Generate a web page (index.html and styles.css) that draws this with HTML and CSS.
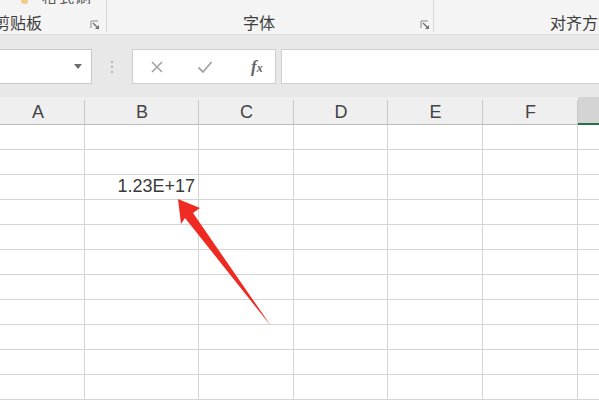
FILE: index.html
```html
<!DOCTYPE html>
<html>
  <head>
    <title>Excel</title>
    <link rel="stylesheet" href="styles.css">
  </head>
  <body>
    <div class="window">
      <div class="ribbon">
        <div class="group group-clip">
          <div class="clip-top">
            <span class="paste-icon"></span>
            <span class="clip-text">格式刷</span>
          </div>
          <div class="group-foot">
            <span class="group-label">剪贴板</span>
            <svg class="launcher" width="10" height="10" viewBox="0 0 10 10">
              <polyline points="1,8 1,1 8,1" fill="none" stroke="#8a8a8a" stroke-width="1"/>
              <line x1="3" y1="3" x2="7" y2="7" stroke="#6a6a6a" stroke-width="1.2"/>
              <polygon points="9,5 9,9 5,9" fill="#6a6a6a"/>
            </svg>
          </div>
        </div>
        <div class="group group-font">
          <div class="group-foot">
            <span class="group-label">字体</span>
            <svg class="launcher" width="10" height="10" viewBox="0 0 10 10">
              <polyline points="1,8 1,1 8,1" fill="none" stroke="#8a8a8a" stroke-width="1"/>
              <line x1="3" y1="3" x2="7" y2="7" stroke="#6a6a6a" stroke-width="1.2"/>
              <polygon points="9,5 9,9 5,9" fill="#6a6a6a"/>
            </svg>
          </div>
        </div>
        <div class="group group-align">
          <div class="group-foot">
            <span class="group-label">对齐方式</span>
          </div>
        </div>
      </div>

      <div class="formula-bar">
        <div class="name-box">
          <span class="caret"></span>
        </div>
        <div class="grip">
          <span></span><span></span><span></span>
        </div>
        <div class="fx-buttons">
          <svg width="14" height="14" viewBox="0 0 14 14">
            <path d="M2 2L12 12M12 2L2 12" stroke="#a3a3a3" stroke-width="1.6" fill="none"/>
          </svg>
          <svg width="16" height="14" viewBox="0 0 16 14">
            <path d="M1.5 7.5L6 12L14.5 2" stroke="#a3a3a3" stroke-width="1.8" fill="none"/>
          </svg>
          <span class="fx">f<sub>x</sub></span>
        </div>
        <div class="formula-input"></div>
      </div>

      <div class="sheet">
        <div class="col-head">A</div>
        <div class="col-head">B</div>
        <div class="col-head">C</div>
        <div class="col-head">D</div>
        <div class="col-head">E</div>
        <div class="col-head">F</div>
        <div class="col-head selected"></div>
      </div>

      <svg class="arrow" width="599" height="402" viewBox="0 0 599 402">
        <polygon points="178,199 200,208 193,213 271,326 185,218 181,224" fill="#ee2a22"/>
      </svg>
    </div>

    <script>
      // fill the body rows of the sheet
      const sheet = document.querySelector(".sheet");
      for (let r = 0; r < 11; r++) {
        for (let c = 0; c < 7; c++) {
          const cell = document.createElement("div");
          cell.className = "cell";
          if (r === 2 && c === 1) {
            cell.textContent = "1.23E+17";
          }
          sheet.appendChild(cell);
        }
      }
    </script>
  </body>
</html>
```

FILE: styles.css
```css
/* page */
body {
  margin: 0;
  font-family: "Liberation Sans", "Noto Sans CJK SC", sans-serif;
  color: #444;
}

.window {
  position: relative;
  width: 599px;
  height: 402px;
  overflow: hidden;
  background: #fff;
}

/* ribbon */
.ribbon {
  display: flex;
  height: 35px;
  background: #f4f4f4;
  border-bottom: 1px solid #dcdcdc;
  box-sizing: border-box;
}

.group {
  display: flex;
  flex-direction: column;
  justify-content: flex-end;
  flex-shrink: 0;
  padding-bottom: 2px;
  box-sizing: border-box;
}

.group-clip {
  width: 107px;
  border-right: 1px solid #d6d6d6;
  margin-bottom: 2px;
  padding-bottom: 0;
}

.group-font {
  width: 327px;
  border-right: 1px solid #d6d6d6;
  margin-bottom: 2px;
  padding-bottom: 0;
}

.group-align {
  flex: 1;
  min-width: 0;
  overflow: hidden;
}

.clip-top {
  display: flex;
  align-items: flex-end;
  height: 4px;
  overflow: hidden;
  margin-bottom: auto;
}

.paste-icon {
  width: 7px;
  height: 12px;
  margin-left: 21px;
  border-radius: 0 0 4px 4px;
  background: #f2c98a;
}

.clip-text {
  margin-left: 14px;
  font-size: 15px;
  line-height: 13px;
  color: #555;
  letter-spacing: 2px;
}

.group-foot {
  display: flex;
  align-items: flex-end;
  height: 20px;
}

.group-label {
  font-family: "Noto Sans CJK SC", sans-serif;
  font-size: 16px;
  line-height: 20px;
  color: #3d3d3d;
  white-space: nowrap;
  flex-shrink: 0;
}

.launcher {
  margin-left: auto;
  margin-bottom: 2px;
}

.group-clip .group-label {
  margin-left: -6px;
}

.group-clip .launcher {
  margin-right: 6px;
}

.group-font .group-label {
  margin-left: 136px;
}

.group-font .launcher {
  margin-right: 3px;
}

.group-align .group-label {
  margin-left: 116px;
}

/* formula bar */
.formula-bar {
  display: flex;
  align-items: center;
  height: 62px;
  padding-top: 1px;
  box-sizing: border-box;
  background: #e8e8e8;
}

.name-box {
  display: flex;
  align-items: center;
  justify-content: flex-end;
  width: 94px;
  height: 35px;
  margin-left: -2px;
  box-sizing: border-box;
  background: #fff;
  border: 1px solid #c9c9c9;
  padding-right: 9px;
}

.caret {
  width: 0;
  height: 0;
  border-left: 4px solid transparent;
  border-right: 4px solid transparent;
  border-top: 5px solid #6e6e6e;
}

.grip {
  display: flex;
  flex-direction: column;
  gap: 3px;
  margin-left: 19px;
  width: 21px;
}

.grip span {
  width: 2px;
  height: 2px;
  background: #b5b5b5;
}

.fx-buttons {
  display: flex;
  align-items: center;
  width: 144px;
  height: 35px;
  box-sizing: border-box;
  background: #fff;
  border: 1px solid #cfcfcf;
  padding-left: 17px;
  gap: 33px;
}

.fx {
  font-family: "Liberation Serif", serif;
  font-style: italic;
  font-weight: bold;
  font-size: 17px;
  color: #666;
  margin-left: 5px;
}

.fx sub {
  font-size: 12px;
  vertical-align: 0;
}

.formula-input {
  flex: 1;
  height: 35px;
  margin-left: 5px;
  background: #fff;
  border: 1px solid #cfcfcf;
  border-right: none;
  box-sizing: border-box;
}

/* sheet */
.sheet {
  display: grid;
  grid-template-columns: 94px 114px 95px 94px 95px 95px 40px;
  grid-template-rows: 28px;
  grid-auto-rows: 25px;
  margin-left: -9px;
}

.col-head {
  display: flex;
  align-items: flex-end;
  justify-content: center;
  padding-bottom: 2px;
  box-sizing: border-box;
  background: #efefef;
  border-bottom: 1px solid #bcbcbc;
  font-size: 18px;
  line-height: 20px;
  color: #444;
  background-image: linear-gradient(#c9c9c9, #c9c9c9);
  background-size: 1px 24px;
  background-position: right bottom;
  background-repeat: no-repeat;
}

.col-head.selected {
  background: #d4d4d4;
  border-bottom: 2px solid #217346;
}

.cell {
  box-sizing: border-box;
  border-right: 1px solid #d5d5d5;
  border-bottom: 1px solid #d5d5d5;
  text-align: right;
  padding-right: 3px;
  font-size: 18px;
  line-height: 22px;
  color: #3a3a3a;
}

.arrow {
  position: absolute;
  left: 0;
  top: 0;
}
```
